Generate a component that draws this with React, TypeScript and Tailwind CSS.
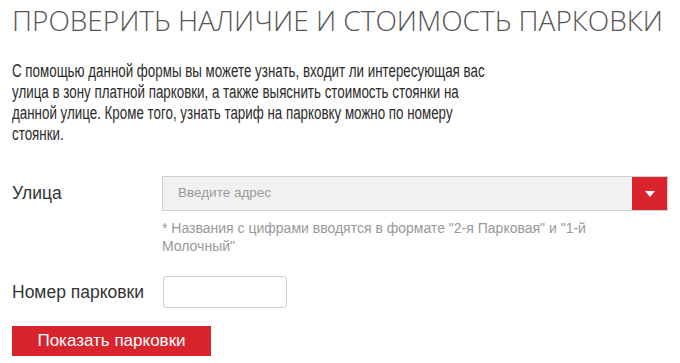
export default function App() {
  return (
    <div className="min-h-[363px] w-[680px] overflow-hidden bg-white px-[12px] pt-[1px] font-['Liberation_Sans',Arial,sans-serif] text-[#333]">
      <h1 className="font-['Open_Sans',sans-serif] text-[28px] font-light leading-[38px] text-[#555]">
        ПРОВЕРИТЬ НАЛИЧИЕ И СТОИМОСТЬ ПАРКОВКИ
      </h1>

      {/* narrow face in the original: Arial squeezed horizontally */}
      <p className="mt-[22px] w-[661px] origin-left scale-x-[0.742] text-[18px] leading-[21px] text-[#2b2b2b]">
        С помощью данной формы вы можете узнать, входит ли интересующая вас улица в зону платной парковки, а также
        выяснить стоимость стоянки на данной улице. Кроме того, узнать тариф на парковку можно по номеру стоянки.
      </p>

      <div className="mt-[31px] flex items-start">
        <label className="w-[151px] pt-[5px] text-[17.5px] leading-[24px]">Улица</label>
        <div className="flex-1">
          <div className="flex h-[35px] w-[506px] border border-[#cfcfcf] bg-[#f1f1f1]">
            <div className="flex flex-1 items-center pl-[15px] text-[13.5px] text-[#9a9a9a]">Введите адрес</div>
            <button className="flex w-[35px] items-center justify-center bg-[#d9232d]">
              <svg width="10" height="6" viewBox="0 0 10 6">
                <path d="M0 0 H10 L5 6 Z" fill="#fff" />
              </svg>
            </button>
          </div>
          <p className="mt-[8px] w-[472px] text-[14px] leading-[18px] text-[#999]">
            * Названия с цифрами вводятся в формате "2-я Парковая" и "1-й Молочный"
          </p>
        </div>
      </div>

      <div className="mt-[21px] flex items-center">
        <label className="w-[151px] text-[17.5px] leading-[24px]">Номер парковки</label>
        <input className="h-[32px] w-[124px] rounded-[3px] border border-[#cfcfcf] bg-white px-2 text-[14px] outline-none" />
      </div>

      <button className="mt-[18px] h-[30px] w-[199px] bg-[#d9232d] text-[17px] text-white">Показать парковки</button>
    </div>
  );
}
